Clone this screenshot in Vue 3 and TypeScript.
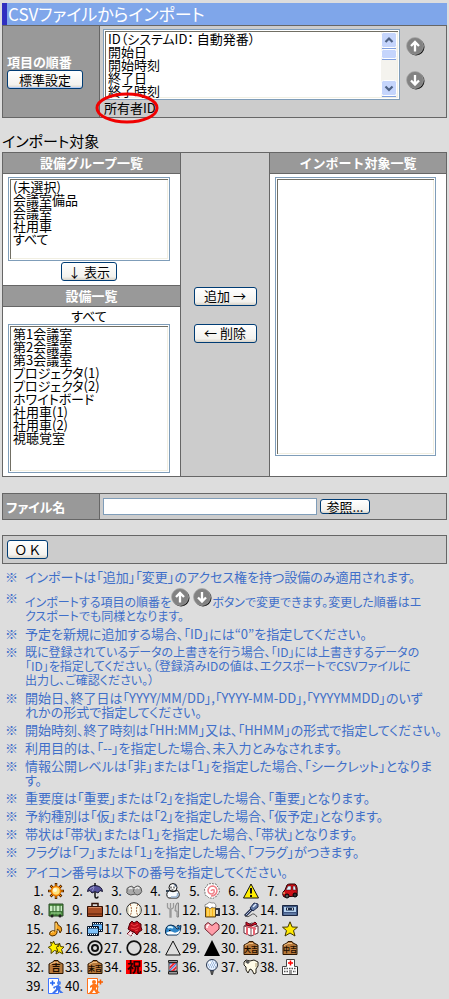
<script setup lang="ts">
import { ref } from 'vue'

interface Note {
  lines: string[]
  compact?: boolean
}

const columns = ['ID（システムID： 自動発番）', '開始日', '開始時刻', '終了日', '終了時刻']
const groups = ['(未選択)', '会議室備品', '会議室', '社用車', 'すべて']
const facilities = [
  '第1会議室', '第2会議室', '第3会議室', 'プロジェクタ(1)', 'プロジェクタ(2)',
  'ホワイトボード', '社用車(1)', '社用車(2)', '視聴覚室',
]
const fileName = ref('')

const notes: Note[] = [
  { lines: ['予定を新規に追加する場合、「ID」には“0”を指定してください。'] },
  {
    lines: [
      '既に登録されているデータの上書きを行う場合、「ID」には上書きするデータの',
      '「ID」を指定してください。（登録済みIDの値は、エクスポートでCSVファイルに',
      '出力し、ご確認ください。）',
    ],
    compact: true,
  },
  { lines: ['開始日、終了日は「YYYY/MM/DD」,「YYYY-MM-DD」,「YYYYMMDD」のいず', 'れかの形式で指定してください。'] },
  { lines: ['開始時刻、終了時刻は「HH:MM」又は、「HHMM」の形式で指定してください。'] },
  { lines: ['利用目的は、「--」を指定した場合、未入力とみなされます。'] },
  { lines: ['情報公開レベルは「非」または「1」を指定した場合、「シークレット」となりま', 'す。'] },
  { lines: ['重要度は「重要」または「2」を指定した場合、「重要」となります。'] },
  { lines: ['予約種別は「仮」または「2」を指定した場合、「仮予定」となります。'] },
  { lines: ['帯状は「帯状」または「1」を指定した場合、「帯状」となります。'] },
  { lines: ['フラグは「フ」または「1」を指定した場合、「フラグ」がつきます。'] },
]

const plaque = (label: string, size: number): string =>
  `<path d="M1 5 5 3 6 1.500H10L11 3 15 5V14.500H1Z" fill="#b87a3c" stroke="#2a1400"/><path d="M2 5.500 6 3.500H10" stroke="#efc084" fill="none"/><text x="8" y="12" text-anchor="middle" font-size="${size}" font-weight="700" fill="#1c0d00">${label}</text>`

const icons: { no: number; art: string }[] = [
  { no: 1, art: '<g stroke="#5a2800" stroke-width="2.500"><path d="M8 0V16M0 8H16M2.500 2.500 13.500 13.500M13.500 2.500 2.500 13.500"/></g><path d="M8 1V15M1 8H15M3 3 13 13M13 3 3 13" stroke="#ff9900"/><circle cx="8" cy="8" r="4.500" fill="#ffe27a" stroke="#ef7d00" stroke-width="1.500"/><circle cx="7" cy="7" r="2" fill="#fff8d8"/>' },
  { no: 2, art: '<path d="M8 0V3M8 9V13.500Q8 15 9.500 15T11 13.500" stroke="#111" stroke-width="1.500" fill="none"/><path d="M.5 8.500Q1 3 8 2.500 15 3 15.500 8.500L13 7.500 11 10 8 8.500 5 10 3 7.500Z" fill="#56539b" stroke="#15132f"/><path d="M3 6 7 3.500M7 4 5.500 8" stroke="#9997cb" fill="none"/>' },
  { no: 3, art: '<path d="M1 8Q0 5 3 4 6 2 8 5 12 1 15 5 17 9 14 11 11 13 9 11 4 13 2 11 0 10 1 8Z" fill="#a9a9a9" stroke="#555"/><path d="M3 6Q5 4 6 6M9 6Q12 3 13 6" stroke="#eee" stroke-width="1.500" fill="none"/><path d="M8 6Q6 9 9 10" stroke="#666" fill="none"/>' },
  { no: 4, art: '<circle cx="8" cy="4.500" r="4" fill="#fff" stroke="#111"/><path d="M8 .5Q12 1 12 5L10 3Z" fill="#4b5d7a"/><path d="M3.500 7.500Q0 12 3.500 15H12.500Q16 12 12.500 7.500Q8 10 3.500 7.500Z" fill="#f7fbff" stroke="#111"/><path d="M12.500 10Q13.500 13 11 14H6" stroke="#9ab4d0" stroke-width="1.500" fill="none"/><path d="M6 3.500V5.500M9 3.500V5.500M6.500 7H8.500" stroke="#111"/><path d="M1 8H4" stroke="#334455" stroke-width="2"/>' },
  { no: 5, art: '<path d="M8 .5 10 1 12 1 13 3 15 5 15 7 15.500 9 14 11 13 13 11 14 9 15.500 7 15 5 15 3 13 1 12 1 9 .5 7 1 5 3 3 4 1Z" fill="#fff" stroke="#777" stroke-dasharray="2 1"/><path d="M7 8Q8 6 10 7 11 10 8 11 4 11 4 7 5 3 9 3 13 4 13 8 12 13 7 13" fill="none" stroke="#ef8088" stroke-width="1.500"/>' },
  { no: 6, art: '<path d="M8 1 15.500 15H.5Z" fill="#ffed00" stroke="#111" stroke-linejoin="round"/><path d="M8 5V10.500M8 12V14" stroke="#111" stroke-width="2"/>' },
  { no: 7, art: '<path d="M1 9 3 7 5 2Q6 1 8 1H13Q16 2 15 13L2 14Q0 12 1 9Z" fill="#cc1017" stroke="#290003"/><path d="M6 3H9V7H4ZM11 3H13L14 7H11Z" fill="#d9f2ff" stroke="#490006" stroke-width=".5"/><circle cx="5" cy="13" r="2" fill="#555" stroke="#000"/><circle cx="13" cy="12" r="2" fill="#333" stroke="#000"/><path d="M1 10H3" stroke="#ffeb85"/>' },
  { no: 8, art: '<path d="M1 2H15V14H1Z" fill="#559449" stroke="#264822"/><path d="M2 4H14V9H2Z" fill="#c9ecc3"/><path d="M5 2V14M8 2V14M12 2V14M1 10H15" stroke="#376732"/><path d="M3 11H13" stroke="#9fe095"/><circle cx="4" cy="14" r="1.500" fill="#222"/><circle cx="12" cy="14" r="1.500" fill="#222"/>' },
  { no: 9, art: '<path d="M5 4V1.500H11V4" fill="none" stroke="#321106" stroke-width="1.500"/><path d="M.5 4.500H15.500V14.500H.5Z" fill="#a84e26" stroke="#321106"/><path d="M1.500 5.500H14" stroke="#dc8d62"/><path d="M1 12H15" stroke="#7c3416" stroke-width="2"/>' },
  { no: 10, art: '<circle cx="8" cy="8" r="7.300" fill="#fffdf1" stroke="#222"/><path d="M4 2Q7 8 4 14M12 2Q9 8 12 14" fill="none" stroke="#9b5f36" stroke-dasharray="2 1"/><path d="M2 5V11M14 5V11" stroke="#c9c4a8"/>' },
  { no: 11, art: '<path d="M2.500 1V5Q3 7 5 7V15H6V7Q8 7 8.500 5V1M5.500 1V6" fill="none" stroke="#999" stroke-width="1.300"/><path d="M12 1Q10 3 10 9H12V15H13.500V1Z" fill="#c9c9c9" stroke="#888"/>' },
  { no: 12, art: '<path d="M11 7H15V13H11" fill="none" stroke="#313848" stroke-width="2"/><path d="M1.500 5H11.500V15H1.500Z" fill="#f7b51e" stroke="#54401e"/><path d="M4 7V14M7 7V14M10 7V14" stroke="#fff0a2"/><path d="M1 5Q0 2 3 2 5-1 8 1 12 0 12 5L10 6 8 5 6 7 4 5Z" fill="#fff" stroke="#777" stroke-width=".8"/>' },
  { no: 13, art: '<path d="M2 14 9 7" stroke="#27314e" stroke-width="3"/><path d="M3 13 9 7" stroke="#aab9dc"/><path d="M7 6 11 1 15 2 15 5 10 9Z" fill="#6279a4" stroke="#202d50"/><path d="M10 5 13 2" stroke="#e0edff" stroke-width="1.500"/><path d="M2 14Q5 16 8 13T14 15" fill="none" stroke="#555"/>' },
  { no: 14, art: '<path d="M.5 3.500H15.500V13.500H.5Z" fill="#3d5682" stroke="#1b2742"/><path d="M2 5H14V10H2Z" fill="#b8d4ef"/><path d="M4 7H12" stroke="#172745" stroke-width="3"/><path d="M5 7H6M10 7H11" stroke="#fff" stroke-width="1.500"/><path d="M2 12H14" stroke="#839bc0"/>' },
  { no: 15, art: '<path d="M7 1H9Q9 4 13 6 15 9 12 12 12 9 9 8V12Q8 15 4 15 0 14 2 11 4 9 7 10Z" fill="#f6a21c" stroke="#563100"/><path d="M8 2V10M3 12Q4 10 6 11" fill="none" stroke="#ffe18a"/>' },
  { no: 16, art: '<path d="M5.500 1.500H15.500V10.500H5.500Z" fill="#69b8fa" stroke="#071528"/><path d="M6 2.500H15M6 9.500H15" stroke="#05152b" stroke-width="2"/><path d="M6 2.500H15M6 9.500H15" stroke="#fff" stroke-dasharray="1 1"/><path d="M.5 5.500H11.500V14.500H.5Z" fill="#7fc3fb" stroke="#071528"/><path d="M1 6.500H11M1 13.500H11" stroke="#05152b" stroke-width="2"/><path d="M1 6.500H11M1 13.500H11" stroke="#fff" stroke-dasharray="1 1"/>' },
  { no: 17, art: '<path d="M5 9 1 13 5 15 8 10" fill="#ffd5dd" stroke="#6d0b1b"/><path d="M4 2 6 0 8 2 11 0 13 2 15 3 15 6 16 9 13 11 11 14 8 11 5 10 2 8 3 5Z" fill="#ba0c18" stroke="#530009"/><path d="M5 3 8 5 12 3M5 7 9 8 13 6M9 10 12 9" stroke="#f04046" fill="none"/><path d="M1 14H5M4 12 8 15" stroke="#fff"/>' },
  { no: 18, art: '<path d="M.5 12Q0 4 6 4 10 4 12 8L14 7.500 12 5.500 13 4 14.500 5 16 4.500 15.500 8Q15 13 12 14H2Z" fill="#2f86c8" stroke="#07294e"/><path d="M1 12Q5 9 8 11T15 9Q15 12 12 13.500H3Z" fill="#fff"/><path d="M3 7Q5 5 8 7" stroke="#d2f3ff" stroke-width="2" fill="none"/><path d="M4 9.500H5.500" stroke="#000"/>' },
  { no: 19, art: '<path d="M8 14.500 1 8V4L4 1.500 8 4.500 12 1.500 15 4V8Z" fill="#ff9da9" stroke="#6f2530"/><path d="M3 7V5L5 3.500" fill="none" stroke="#fff" stroke-width="1.500"/>' },
  { no: 20, art: '<path d="M1 5 9 2 15 5V12L8 15 1 12Z" fill="#fff" stroke="#54303a"/><path d="M1 5 8 7 15 5M8 7V15" stroke="#784850" fill="none"/><path d="M4 6V14M11 6V14M3 4 13 8" stroke="#e76572" stroke-width="2"/><path d="M3 1 8 4 12 1 14 3 8 5 3 4Z" fill="#e11429" stroke="#620311"/>' },
  { no: 21, art: '<path d="M8 .8 10.200 6 15.500 6.200 11.500 9.600 13 15 8 12 3 15 4.500 9.600.5 6.200 5.800 6Z" fill="#ffe900" stroke="#403500"/>' },
  { no: 22, art: '<path d="M11.500 3 12.500 6.500 16 7 13.500 9.500 15 14 11.500 12 8 14 9 9.500 7 6.500 10.500 6.500Z" fill="#ffe600" stroke="#4d4100"/><path d="M5.500 1 7 4.500 11 4 8.500 7.500 10 11.500 6.500 10.500 3 13.500 3.200 9.500.3 7.300 3.500 5.500 2.500 2 4.800 3.200Z" fill="#fff100" stroke="#4d4100"/>' },
  { no: 26, art: '<circle cx="8" cy="8" r="6.800" fill="none" stroke="#111" stroke-width="1.700"/><circle cx="8" cy="8" r="3" fill="none" stroke="#111" stroke-width="2"/>' },
  { no: 27, art: '<circle cx="8" cy="8" r="6.800" fill="none" stroke="#111" stroke-width="1.700"/>' },
  { no: 28, art: '<path d="M8 1 15.300 15H.7Z" fill="none" stroke="#111"/>' },
  { no: 29, art: '<path d="M8 0 16 16H0Z" fill="#000"/>' },
  { no: 30, art: plaque('大吉', 7) },
  { no: 31, art: plaque('中吉', 7) },
  { no: 32, art: plaque('吉', 9) },
  { no: 33, art: plaque('末吉', 7) },
  { no: 34, art: '<path d="M0 1H16V15H0Z" fill="#f00"/><text x="8" y="13" text-anchor="middle" font-size="14" font-weight="700" fill="#260000">祝</text>' },
  { no: 35, art: '<path d="M3.500 1.500H12.500V3.500H3.500ZM3.500 12.500H12.500V15H3.500Z" fill="#999" stroke="#222"/><path d="M4 4H12V12H4Z" fill="#fff" stroke="#222"/><path d="M4.500 7.500 8 4H11L4.500 10.500ZM6 12 11.500 6.500V9.500L9 12Z" fill="#e82935"/><path d="M4.500 5 5.500 4H7L4.500 6.500ZM4.500 12V11L11.500 4V5.500L5 12Z" fill="#376fdb"/>' },
  { no: 36, art: '<path d="M6.500 11H9.500L8.500 15.500H7.500Z" fill="#666" stroke="#333"/><circle cx="8" cy="6" r="5.500" fill="#e5f0ff" stroke="#26344d"/><path d="M5 4H12M4 6H12M5 8H12M6 2H10" stroke="#6d8db8" stroke-dasharray="1 1"/><path d="M5 4 7 3" stroke="#fff" stroke-width="2"/>' },
  { no: 37, art: '<path d="M1 3 3 1 7 2 11 1 15 3 15 7 13 10V14L11 15 9 11 7 10 5 14 3 11 3 8 1 6Z" fill="#fffbe8" stroke="#242018"/><path d="M2 3 4 1 7 3 5 5Z" fill="#555"/><path d="M13 4V8" stroke="#cbbe99" stroke-width="1.500"/>' },
  { no: 38, art: '<path d="M.5 7.500H4.500V.5H12.500V7.500H15.500V15.500H.5Z" fill="#fff" stroke="#444"/><path d="M8.500 1.500V6.500M6 4H11" stroke="#f00" stroke-width="1.500"/><path d="M2 9.500H14M2 12.500H6M11 12.500H14" stroke="#555" stroke-width="1.500" stroke-dasharray="1.500 1"/><path d="M7 11H10V15H7Z" fill="#999"/><path d="M15.500 8V16" stroke="#222"/>' },
  { no: 39, art: '<path d="M.5.5H10.500V15.500H.5Z" fill="#fff" stroke="#3d75ff"/><path d="M2 5H7M4.500 2.500V7.500" stroke="#2468f3" stroke-width="1.500"/><circle cx="11" cy="5" r="2" fill="#4b83f2"/><path d="M10 7 13 9 12 12 15.500 15H12L10 12 7 15H4L8 11V9L6 11 5 9Z" fill="#3d73ed"/>' },
  { no: 40, art: '<path d="M.5.5H10.500V15.500H.5Z" fill="#fff" stroke="#ff7219"/><path d="M11 4H16M13.500 1.500V6.500" stroke="#f85d00" stroke-width="1.500"/><circle cx="7" cy="4" r="2" fill="#ff7519"/><path d="M6 6H9L12 9 10 10 9 9V11L13 15H9L7 12 5 15H2L5 11V9L3 10V8Z" fill="#ff7519"/>' },
]
</script>

<template>
  <main class="page">
    <h1 class="title">CSVファイルからインポート</h1>
    <section class="field">
      <div class="field-name order-name">
        <label for="order">項目の順番</label>
        <button type="button" class="button default">標準設定</button>
      </div>
      <div class="order">
        <div class="order-main">
          <div class="list-wrap">
            <select id="order" class="list order-list" size="5" multiple>
              <option v-for="c in columns" :key="c">{{ c }}</option>
            </select>
            <svg class="scrollbar" viewBox="0 0 16 65" aria-hidden="true">
              <path d="M0 0H16V65H0Z" fill="#f4f3ee" />
              <g fill="#c5d5fc" stroke="#fff">
                <rect x=".5" y=".5" width="15" height="15" rx="2" />
                <rect x=".5" y="17.5" width="15" height="9" rx="2" />
                <rect x=".5" y="48.500" width="15" height="15" rx="2" />
              </g>
              <path d="M1 16.500H15M1 27.500H15M1 64.500H15" stroke="#7f9fe0" />
              <path d="M4.500 10 8 6.500 11.500 10M4.500 54.500 8 58 11.500 54.500" fill="none" stroke="#4d6185" stroke-width="2.200" />
            </svg>
          </div>
          <div class="extra">
            <span>所有者ID</span>
            <svg class="ring" viewBox="0 0 64 32" aria-hidden="true">
              <ellipse cx="32" cy="16" rx="30" ry="14" fill="none" stroke="#f00000" stroke-width="3" />
            </svg>
          </div>
        </div>
        <div class="movers">
          <button type="button" class="round" aria-label="上へ">
            <svg class="arrow" viewBox="0 0 19 19"><circle cx="10" cy="10" r="8.500" fill="#111" /><circle cx="9" cy="9" r="8.500" fill="#828282" stroke="#aaa" stroke-width=".7" /><path d="M9 14.500V5M5 9 9 5 13 9" fill="none" stroke="#fff" stroke-width="2.300" /></svg>
          </button>
          <button type="button" class="round" aria-label="下へ">
            <svg class="arrow" viewBox="0 0 19 19"><circle cx="10" cy="10" r="8.500" fill="#111" /><circle cx="9" cy="9" r="8.500" fill="#828282" stroke="#aaa" stroke-width=".7" /><path d="M9 4V13.500M5 9.500 9 13.500 13 9.500" fill="none" stroke="#fff" stroke-width="2.300" /></svg>
          </button>
        </div>
      </div>
    </section>

    <h2 class="section-title">インポート対象</h2>
    <section class="transfer">
      <div class="column">
        <label class="head" for="groups">設備グループ一覧</label>
        <div class="cell">
          <select id="groups" class="list group-list" size="6" multiple>
            <option v-for="g in groups" :key="g">{{ g }}</option>
          </select>
          <button type="button" class="button show">↓ 表示</button>
        </div>
        <label class="head lower" for="facilities">設備一覧</label>
        <div class="cell last">
          <span class="scope">すべて</span>
          <select id="facilities" class="list facility-list" size="11" multiple>
            <option v-for="f in facilities" :key="f">{{ f }}</option>
          </select>
        </div>
      </div>
      <div class="actions">
        <button type="button" class="button">追加 →</button>
        <button type="button" class="button">← 削除</button>
      </div>
      <div class="column">
        <label class="head" for="targets">インポート対象一覧</label>
        <div class="cell">
          <select id="targets" class="list target-list" size="21" multiple></select>
        </div>
      </div>
    </section>

    <section class="field spaced">
      <label class="field-name" for="file">ファイル名</label>
      <div class="file">
        <input id="file" v-model="fileName" type="text" class="file-input" />
        <button type="button" class="button browse">参照...</button>
      </div>
    </section>

    <section class="submit">
      <button type="button" class="button">Ｏ Ｋ</button>
    </section>

    <ul class="notes">
      <li><span>インポートは「追加」「変更」のアクセス権を持つ設備のみ適用されます。</span></li>
      <li class="with-arrows">
        <div class="compact">
          <div class="arrow-line">
            インポートする項目の順番を
            <svg class="arrow" viewBox="0 0 19 19" aria-hidden="true"><circle cx="10" cy="10" r="8.500" fill="#111" /><circle cx="9" cy="9" r="8.500" fill="#828282" stroke="#aaa" stroke-width=".7" /><path d="M9 14.500V5M5 9 9 5 13 9" fill="none" stroke="#fff" stroke-width="2.300" /></svg>
            <svg class="arrow second" viewBox="0 0 19 19" aria-hidden="true"><circle cx="10" cy="10" r="8.500" fill="#111" /><circle cx="9" cy="9" r="8.500" fill="#828282" stroke="#aaa" stroke-width=".7" /><path d="M9 4V13.500M5 9.500 9 13.500 13 9.500" fill="none" stroke="#fff" stroke-width="2.300" /></svg>
            ボタンで変更できます。変更した順番はエ
          </div>
          クスポートでも同様となります。
        </div>
      </li>
      <li v-for="(note, i) in notes" :key="i">
        <div :class="{ compact: note.compact }">
          <div v-for="line in note.lines" :key="line">{{ line }}</div>
        </div>
      </li>
      <li class="icons-note"><span>アイコン番号は以下の番号を指定してください。</span></li>
    </ul>
    <ol class="icons">
      <li v-for="icon in icons" :key="icon.no">
        <span>{{ icon.no }}.</span>
        <svg class="icon" viewBox="0 0 16 16" aria-hidden="true" v-html="icon.art"></svg>
      </li>
    </ol>
  </main>
</template>

<style>
body {
  background: #ddd;
}
</style>

<style scoped>
.page,
.page * {
  box-sizing: border-box;
}
.page {
  padding: 3px 2px 0;
  color: #000;
  font-family: "Noto Sans CJK JP", sans-serif;
  font-size: 13px;
  line-height: 14px;
  font-feature-settings: "palt";
}
button,
input,
select {
  font: inherit;
  font-feature-settings: inherit;
  color: inherit;
}
.title {
  margin: 0;
  border-left: 5px solid #3030c0;
  background: #7fa6ea;
  color: #fff;
  font-size: 17px;
  font-weight: 400;
  line-height: 22px;
  padding-left: 1px;
}
.field {
  display: grid;
  grid-template-columns: 97px 1fr;
  border: 1px solid #666;
  background: #ccc;
}
.field-name {
  border-right: 1px solid #666;
  background: #999;
  color: #fff;
  font-weight: 700;
  line-height: 25px;
  padding-left: 3px;
  white-space: nowrap;
}
.order-name {
  display: flex;
  flex-direction: column;
  justify-content: center;
  align-items: flex-start;
  line-height: 16px;
  padding-left: 4px;
}
.button {
  height: 19px;
  padding: 0;
  border: 1px solid #003c74;
  border-radius: 3px;
  background: linear-gradient(#fff, #f3f2ee 80%, #d8d3c8);
  color: #000;
  font-weight: 400;
  line-height: 16px;
  white-space: nowrap;
}
.default {
  width: 76px;
  box-shadow: inset 0 -1px #b5cdf5;
}
.order {
  display: flex;
  padding: 3px 3px 1px;
}
.order-main {
  flex: 0 1 297px;
  min-width: 0;
}
.list-wrap {
  position: relative;
}
.list {
  display: block;
  width: 100%;
  margin: 0;
  padding: 2px 4px;
  border: 1px solid #7f9db9;
  border-radius: 0;
  background: #fff;
  box-shadow: inset 0 0 0 1px #fff, inset 2px 2px #716f64, inset -2px -2px #f1efe2;
  overflow: hidden;
  appearance: none;
  outline: none;
}
.list option {
  display: flex;
  align-items: center;
  min-height: 0;
  height: 13px;
  padding: 0;
  line-height: 13px;
}
.order-list {
  height: 71px;
}
.scrollbar {
  position: absolute;
  top: 3px;
  right: 3px;
  width: 16px;
  height: 65px;
}
.extra {
  position: relative;
  width: max-content;
  padding-left: 1px;
  line-height: 16px;
}
.ring {
  position: absolute;
  top: -8px;
  left: -8px;
  width: 64px;
  height: 32px;
}
.movers {
  display: flex;
  flex-direction: column;
  gap: 15px;
  padding: 8px 0 0 6px;
}
.round {
  display: block;
  width: 19px;
  height: 19px;
  padding: 0;
  border: 0;
  background: none;
}
.arrow {
  display: block;
  flex: none;
  width: 19px;
  height: 19px;
}
.section-title {
  margin: 14px 0 2px;
  font-size: 15px;
  font-weight: 400;
  line-height: 18px;
}
.transfer {
  display: grid;
  grid-template-columns: 177fr 90fr 176fr;
  border: 1px solid #666;
  background: #fff;
}
.column {
  min-width: 0;
}
.head {
  display: block;
  border-bottom: 1px solid #666;
  background: #999;
  color: #fff;
  font-feature-settings: normal;
  font-weight: 700;
  line-height: 20px;
  text-align: center;
}
.lower {
  border-top: 1px solid #666;
}
.cell {
  padding: 3px 10px 4px 5px;
}
.group-list {
  height: 84px;
}
.show {
  display: block;
  width: 56px;
  margin: 1px auto 0;
}
.last {
  padding: 0 10px 3px 5px;
}
.scope {
  display: block;
  line-height: 17px;
  text-align: center;
}
.facility-list {
  height: 149px;
}
.target-list {
  height: 279px;
}
.actions {
  display: flex;
  flex-direction: column;
  align-items: center;
  justify-content: center;
  gap: 18px;
  border: solid #666;
  border-width: 0 1px;
  background: #ccc;
}
.actions .button {
  width: 63px;
}
.spaced {
  margin-top: 16px;
}
.file {
  display: flex;
  align-items: center;
  gap: 3px;
  padding-left: 3px;
}
.file-input {
  flex: 0 1 214px;
  min-width: 0;
  height: 17px;
  padding: 0 3px;
  border: 1px solid #7f9db9;
  background: #fff;
  outline: none;
}
.browse {
  width: 50px;
  height: 15px;
  line-height: 12px;
}
.submit {
  margin-top: 15px;
  padding: 4px;
  border: 1px solid #666;
  background: #ccc;
}
.submit .button {
  display: block;
  width: 41px;
}
.notes {
  display: grid;
  gap: 4px;
  margin: 6px 0 0;
  padding: 0 0 0 3px;
  list-style: none;
  color: #3f6fc9;
  white-space: nowrap;
}
.notes li {
  display: flex;
}
.notes li::before {
  content: "※";
  flex: none;
  width: 20px;
}
.compact {
  font-size: 12px;
}
.with-arrows::before {
  line-height: 20px;
}
.arrow-line {
  display: flex;
  height: 21px;
  line-height: 27px;
}
.second {
  margin-left: 3px;
}
.icons-note {
  line-height: 18px;
}
.icons {
  display: grid;
  grid-template-columns: repeat(7, 39px);
  margin: 0;
  padding: 0 0 0 23px;
  list-style: none;
}
.icons li {
  display: flex;
  align-items: center;
  justify-content: flex-end;
  gap: 4px;
  height: 19px;
}
.icon {
  width: 16px;
  height: 16px;
  overflow: visible;
}
</style>
